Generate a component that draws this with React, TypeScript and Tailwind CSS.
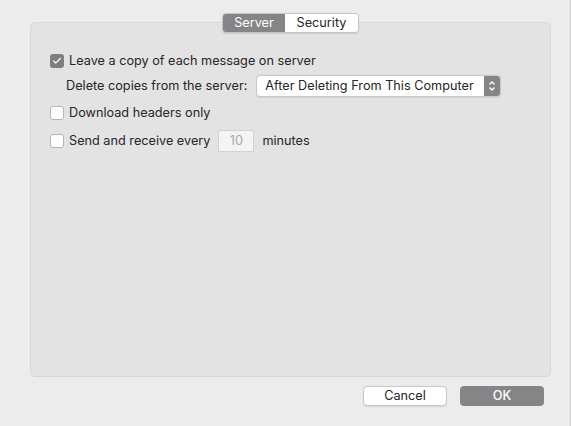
import { Check } from 'lucide-react';

function Checkbox({ checked }: { checked?: boolean }) {
  return checked ? (
    <div className="w-[14px] h-[14px] rounded-[3px] bg-[#7e7d80] flex items-center justify-center shrink-0">
      <Check size={10} strokeWidth={3} className="text-white" />
    </div>
  ) : (
    <div className="w-[14px] h-[14px] rounded-[3px] bg-white border border-[#b5b5b5] shrink-0" />
  );
}

export default function App() {
  return (
    <div
      className="w-[571px] h-[426px] bg-[#ececec] text-[12.7px] text-[#262626] border-r border-[#d0d0d0] flex flex-col"
      style={{ fontFamily: 'Inter, "Liberation Sans", Arial, sans-serif' }}
    >
      <div className="relative ml-[30px] mr-[19px] mt-[22px] h-[355px] bg-[#e3e3e3] border border-[#d8d8d8] rounded-[5px]">
        {/* Tabs */}
        <div className="absolute left-[191px] -top-[10px] flex h-[20px] rounded-[4px] overflow-hidden border border-[#c4c4c4] shadow-[0_0.5px_1px_rgba(0,0,0,0.1)]">
          <div className="w-[62px] bg-[#858487] text-white flex items-center justify-center">Server</div>
          <div className="w-[73px] bg-white text-[#262626] flex items-center justify-center">Security</div>
        </div>

        <div className="pt-[28px] pl-[19px] flex flex-col">
          <div className="flex items-center h-[20px] gap-[5px]">
            <Checkbox checked />
            <span>Leave a copy of each message on server</span>
          </div>
          <div className="flex items-center mt-[4px] h-[22px] pl-[16px]">
            <span>Delete copies from the server:</span>
            <div className="ml-[9px] flex h-[22px] w-[245px] bg-white border border-[#c9c9c9] rounded-[4px] overflow-hidden shadow-[0_0.5px_1px_rgba(0,0,0,0.08)]">
              <span className="flex-1 flex items-center pl-[8px] whitespace-nowrap">After Deleting From This Computer</span>
              <div className="w-[16px] bg-[#858487] flex items-center justify-center">
                <svg width="8" height="12" viewBox="0 0 8 12" fill="none" stroke="white" strokeWidth="1.4">
                  <path d="M1.5 4.5 L4 2 L6.5 4.5" />
                  <path d="M1.5 7.5 L4 10 L6.5 7.5" />
                </svg>
              </div>
            </div>
          </div>
          <div className="flex items-center h-[20px] gap-[5px] mt-[6px]">
            <Checkbox />
            <span>Download headers only</span>
          </div>
          <div className="flex items-center h-[22px] gap-[5px] mt-[7px]">
            <Checkbox />
            <span>Send and receive every</span>
            <div className="ml-[3px] w-[36px] h-[22px] bg-[#f4f4f4] border border-[#d2d2d2] flex items-center justify-center text-[#a8a8a8]">
              10
            </div>
            <span className="ml-[3px]">minutes</span>
          </div>
        </div>
      </div>

      <div className="flex justify-end gap-[13px] pr-[26px] mt-[9px]">
        <div className="w-[84px] h-[20px] bg-white border border-[#c9c9c9] rounded-[4px] flex items-center justify-center shadow-[0_0.5px_1px_rgba(0,0,0,0.1)]">
          Cancel
        </div>
        <div className="w-[84px] h-[20px] bg-[#858487] text-white font-medium rounded-[4px] flex items-center justify-center">
          OK
        </div>
      </div>
    </div>
  );
}
